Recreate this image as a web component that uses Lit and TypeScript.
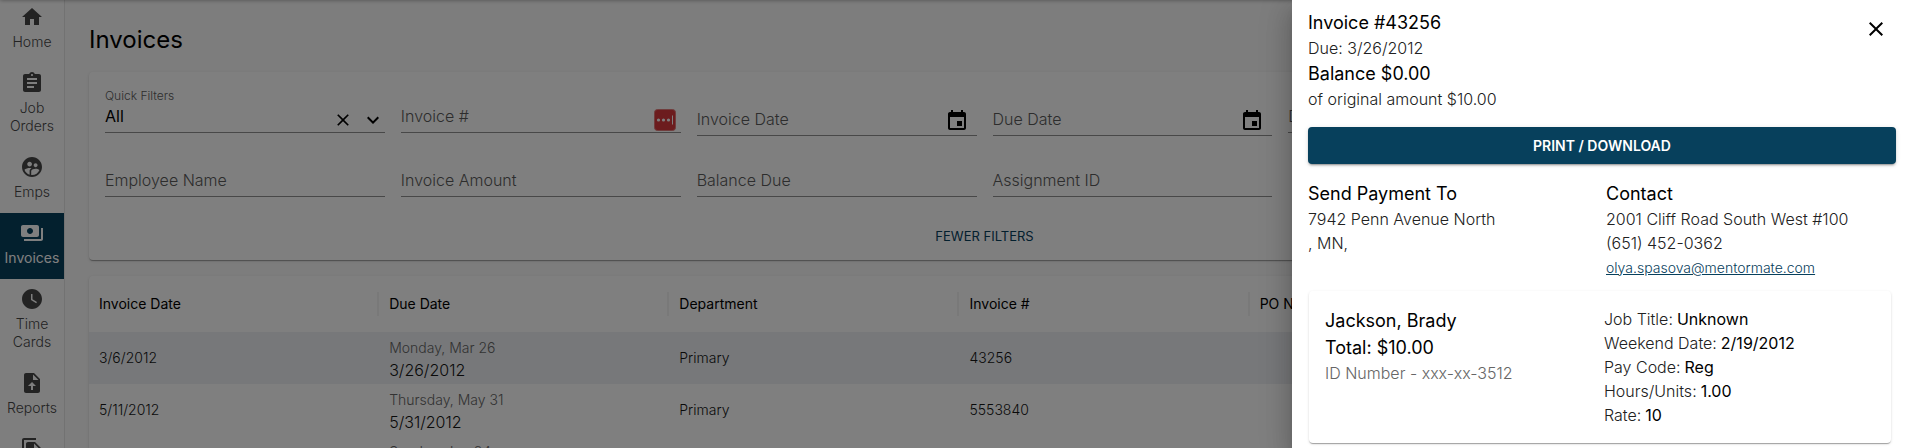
import { LitElement, html, css, svg, nothing } from "lit";
import { customElement, property } from "lit/decorators.js";
import { classMap } from "lit/directives/class-map.js";

const ICONS: Record<string, string> = {
  home: "M10 20v-6h4v6h5v-8h3L12 3 2 12h3v8z",
  assignment:
    "M19 3h-4.18C14.4 1.84 13.3 1 12 1c-1.3 0-2.4.84-2.82 2H5c-1.1 0-2 .9-2 2v14c0 1.1.9 2 2 2h14c1.1 0 2-.9 2-2V5c0-1.1-.9-2-2-2zm-7 0c.55 0 1 .45 1 1s-.45 1-1 1-1-.45-1-1 .45-1 1-1zm2 14H7v-2h7v2zm3-4H7v-2h10v2zm0-4H7V7h10v2z",
  people:
    "M12 2C6.48 2 2 6.48 2 12s4.48 10 10 10 10-4.48 10-10S17.52 2 12 2zm3.61 6.34c1.07 0 1.93.86 1.93 1.93 0 1.07-.86 1.93-1.93 1.93-1.07 0-1.93-.86-1.93-1.93-.01-1.07.86-1.93 1.93-1.93zm-6-1.58c1.3 0 2.36 1.06 2.36 2.36 0 1.3-1.06 2.36-2.36 2.36s-2.36-1.06-2.36-2.36c0-1.31 1.05-2.36 2.36-2.36zm0 9.13v3.75c-2.4-.75-4.3-2.6-5.14-4.96 1.05-1.12 3.67-1.69 5.14-1.69.53 0 1.2.08 1.9.22-1.64.87-1.9 2.02-1.9 2.68zM12 20c-.27 0-.53-.01-.79-.04v-4.07c0-1.42 2.94-2.13 4.4-2.13 1.07 0 2.92.39 3.84 1.15C18.28 17.88 15.39 20 12 20z",
  payments:
    "M19 14V6c0-1.1-.9-2-2-2H3c-1.1 0-2 .9-2 2v8c0 1.1.9 2 2 2h14c1.1 0 2-.9 2-2zm-9-1c-1.66 0-3-1.34-3-3s1.34-3 3-3 3 1.34 3 3-1.34 3-3 3zm13-6v11c0 1.1-.9 2-2 2H4v-2h17V7h2z",
  clock:
    "M12 2C6.5 2 2 6.5 2 12s4.5 10 10 10 10-4.5 10-10S17.5 2 12 2zm4.2 14.2L11 13V7h1.500v5.200l4.500 2.700-.8 1.300z",
  upload:
    "M14 2H6c-1.1 0-1.990.9-1.990 2L4 20c0 1.100.89 2 1.990 2H18c1.100 0 2-.9 2-2V8l-6-6zm-1 13v4h-2v-4H8l4.010-4L16 15h-3zm0-6V3.500L18.500 9H13z",
  copies:
    "M16 1H4c-1.100 0-2 .9-2 2v14h2V3h12V1zm-1 4l6 6v10c0 1.100-.9 2-2 2H7.990C6.890 23 6 22.100 6 21l.01-14c0-1.100.89-2 1.990-2h7zm-1 7h5.500L14 6.500V12z",
  calendar:
    "M17 12h-5v5h5v-5zM16 1v2H8V1H6v2H5c-1.110 0-1.990.9-1.990 2L3 19c0 1.100.89 2 2 2h14c1.100 0 2-.9 2-2V5c0-1.100-.9-2-2-2h-1V1h-2zm3 18H5V8h14v11z",
  close:
    "M19 6.410L17.590 5 12 10.590 6.410 5 5 6.410 10.590 12 5 17.590 6.410 19 12 13.410 17.590 19 19 17.590 13.410 12z",
  chevron: "M7.410 8.590L12 13.170l4.590-4.580L18 10l-6 6-6-6z",
};

@customElement("app-icon")
class AppIcon extends LitElement {
  @property() name = "";
  static styles = css`
    :host { display: block; width: 24px; height: 24px; flex: none; }
    svg { display: block; width: 100%; height: 100%; fill: currentColor; }
  `;
  render() {
    return html`<svg viewBox="0 0 24 24" aria-hidden="true">${svg`<path d=${ICONS[this.name]}></path>`}</svg>`;
  }
}

@customElement("side-nav")
class SideNav extends LitElement {
  static styles = css`
    :host { display: block; }
    nav { display: flex; flex-direction: column; margin-top: -3px; }
    a {
      display: flex; flex-direction: column; align-items: center; gap: 4px;
      padding: 8px 4px 12px; color: #474747; text-decoration: none; text-align: center;
      font-size: 14px; line-height: 18px; font-weight: 300;
    }
    a.active { background: #07405c; color: #fff; font-weight: 400; }
  `;
  items = [
    ["home", "Home"],
    ["assignment", "Job Orders"],
    ["people", "Emps"],
    ["payments", "Invoices"],
    ["clock", "Time Cards"],
    ["upload", "Reports"],
    ["copies", "Files"],
  ];
  render() {
    return html`<nav>
      ${this.items.map(
        ([icon, text]) => html`<a href="#" class=${classMap({ active: text === "Invoices" })}>
          <app-icon name=${icon}></app-icon><span>${text}</span></a>`
      )}
    </nav>`;
  }
}

@customElement("filter-panel")
class FilterPanel extends LitElement {
  static styles = css`
    :host { display: block; padding: 12px 16px 6px; }
    .grid { display: grid; grid-template-columns: repeat(6, minmax(0, 1fr)); column-gap: 16px; }
    .field { display: grid; grid-template-columns: 1fr auto; align-content: end; align-self: start;
      height: 48px; border-bottom: 1px solid #919191; font-size: 16px; line-height: 24px; }
    .field.date { height: 51px; }
    .field.second { margin-top: 12px; height: 48px; }
    .field label { grid-area: 1 / 1; color: #5b5b5b; font-weight: 300; padding-bottom: 4px; }
    .field input { grid-area: 1 / 1; min-width: 0; font: inherit; border: 0; padding: 0 0 4px; background: none; outline: 0; }
    .field app-icon, .field .vault { grid-area: 1 / 2; }
    .date app-icon { margin: 2px 8px 0 0; }
    .vault { width: 22px; height: 22px; margin: 5px 5px 0 0; }
    .quick label { font-size: 12px; line-height: 16px; padding: 0; }
    .quick .row { grid-area: 2 / 1; display: flex; align-items: flex-end; }
    .quick select { flex: 1; min-width: 0; height: 24px; margin: 0 0 4px; appearance: none; border: 0; padding: 0; background: none; font: inherit; color: #000; }
    .quick button { border: 0; background: none; padding: 0; margin: 0 8px 2px 0; color: #000; }
    .quick button app-icon { width: 20px; height: 20px; }
    .more { display: block; margin: 21px auto 0; border: 0; background: none; height: 36px;
      font: 400 13px/36px Inter, sans-serif; color: #07405c; padding: 0 16px; }
  `;
  field(id: string, text: string, second = false, extra: unknown = nothing, date = false) {
    return html`<div class=${classMap({ field: true, second, date })}>
      <label for=${id}>${text}</label><input id=${id} type="text" />${extra}
    </div>`;
  }
  render() {
    const cal = html`<app-icon name="calendar"></app-icon>`;
    const vault = html`<svg class="vault" viewBox="0 0 22 22" aria-hidden="true">
      <rect x="0.500" y="0.500" width="21" height="21" rx="3" fill="#d8383d" stroke="#e07a7a"></rect>
      <circle cx="4.500" cy="11" r="1.600" fill="#fff"></circle>
      <circle cx="9.500" cy="11" r="1.600" fill="#fff"></circle>
      <circle cx="14.500" cy="11" r="1.600" fill="#fff"></circle>
      <rect x="18" y="6.500" width="1" height="9" fill="#fff"></rect>
    </svg>`;
    return html`
      <div class="grid">
        <div class="field quick">
          <label for="quick">Quick Filters</label>
          <div class="row">
            <select id="quick"><option>All</option></select>
            <button aria-label="Clear"><app-icon name="close"></app-icon></button>
            <app-icon name="chevron"></app-icon>
          </div>
        </div>
        ${this.field("num", "Invoice #", false, vault)}
        ${this.field("idate", "Invoice Date", false, cal, true)}
        ${this.field("ddate", "Due Date", false, cal, true)}
        ${this.field("dept", "Department")}
        ${this.field("po", "PO Number")}
        ${this.field("emp", "Employee Name", true)}
        ${this.field("amt", "Invoice Amount", true)}
        ${this.field("bal", "Balance Due", true)}
        ${this.field("asg", "Assignment ID", true)}
      </div>
      <button class="more">FEWER FILTERS</button>
    `;
  }
}

@customElement("invoice-table")
class InvoiceTable extends LitElement {
  static styles = css`
    :host { display: block; }
    table { width: 100%; table-layout: fixed; border-collapse: collapse; font-size: 14px; line-height: 20px; }
    th { height: 56px; padding: 0; font-weight: 400; color: #000; text-align: left; }
    th span { display: block; line-height: 24px; padding-left: 10px; border-right: 2px solid #f2f2f2; }
    th.end { width: 50px; }
    td { height: 52px; padding: 0 10px; font-weight: 300; color: #141414; }
    tr.selected td { background: #eef1f5; }
    .day { display: block; padding-top: 4px; color: #666; }
    .due { display: block; font-size: 16px; line-height: 24px; }
  `;
  rows = [
    ["3/6/2012", "Monday, Mar 26", "3/26/2012", "Primary", "43256"],
    ["5/11/2012", "Thursday, May 31", "5/31/2012", "Primary", "5553840"],
    ["6/4/2012", "Sunday, Jun 24", "6/24/2012", "Primary", "5553841"],
  ];
  render() {
    return html`<table>
      <thead><tr>
        ${["Invoice Date", "Due Date", "Department", "Invoice #", "PO Number", "Balance"].map(
          (h) => html`<th scope="col"><span>${h}</span></th>`
        )}<th class="end"></th>
      </tr></thead>
      <tbody>
        ${this.rows.map(
          (r, i) => html`<tr class=${classMap({ selected: i === 0 })}>
            <td>${r[0]}</td>
            <td><span class="day">${r[1]}</span><span class="due">${r[2]}</span></td>
            <td>${r[3]}</td><td>${r[4]}</td><td></td><td></td><td></td>
          </tr>`
        )}
      </tbody>
    </table>`;
  }
}

@customElement("invoice-drawer")
class InvoiceDrawer extends LitElement {
  static styles = css`
    :host { display: block; box-sizing: border-box; padding: 10px 13px 4px 16px; background: #fff; color: #212121;
      font-size: 16px; line-height: 24px; font-weight: 300; }
    h2, h3, p, dl, dd { margin: 0; }
    header { display: flex; justify-content: space-between; align-items: flex-start; }
    h2, h3, .lead { font-size: 18px; line-height: 26px; font-weight: 400; color: #000; }
    .head p { line-height: 25px; }
    .head .lead { line-height: 26px; }
    .close { border: 0; background: none; padding: 0; margin: 7px 8px 0 0; color: #000; }
    .print { display: block; width: 100%; height: 37px; margin: 15px 0 17px; border: 0; border-radius: 4px;
      background: #07405c; color: #fff; font: 600 14px/36px Inter, sans-serif;
      box-shadow: 0 3px 1px -2px rgba(0,0,0,.2), 0 2px 2px rgba(0,0,0,.14), 0 1px 5px rgba(0,0,0,.12); }
    .cols { display: grid; grid-template-columns: 1fr 1fr; column-gap: 8px; }
    .cols a { font-size: 14px; font-weight: 300; color: #07405c; }
    .card { display: grid; grid-template-columns: 1fr 1fr; column-gap: 8px; margin: 11px 5px 0 1px; padding: 16px; border-radius: 4px;
      box-shadow: 0 2px 1px -1px rgba(0,0,0,.2), 0 1px 1px rgba(0,0,0,.14), 0 1px 3px rgba(0,0,0,.12); }
    .card .lead { line-height: 27px; }
    .id { color: #666; }
    dl div { display: flex; gap: 4px; }
    dt { white-space: nowrap; }
    dd { font-weight: 400; color: #000; }
  `;
  details = [
    ["Job Title:", "Unknown"],
    ["Weekend Date:", "2/19/2012"],
    ["Pay Code:", "Reg"],
    ["Hours/Units:", "1.00"],
    ["Rate:", "10"],
  ];
  render() {
    return html`
      <header>
        <div class="head">
          <h2>Invoice #43256</h2>
          <p>Due: 3/26/2012</p>
          <p class="lead">Balance $0.00</p>
          <p>of original amount $10.00</p>
        </div>
        <button class="close" aria-label="Close"><app-icon name="close"></app-icon></button>
      </header>
      <button class="print">PRINT / DOWNLOAD</button>
      <div class="cols">
        <section><h3>Send Payment To</h3><p>7942 Penn Avenue North</p><p>, MN,</p></section>
        <section><h3>Contact</h3><p>2001 Cliff Road South West #100</p><p>(651) 452-0362</p>
          <p><a href="mailto:olya.spasova@mentormate.com">olya.spasova@mentormate.com</a></p></section>
      </div>
      <div class="card">
        <div><h3 class="lead">Jackson, Brady</h3><p class="lead">Total: $10.00</p><p class="id">ID Number - xxx-xx-3512</p></div>
        <dl>${this.details.map(([k, v]) => html`<div><dt>${k}</dt><dd>${v}</dd></div>`)}</dl>
      </div>
    `;
  }
}

@customElement("app-root")
class AppRoot extends LitElement {
  static styles = css`
    :host { display: block; position: relative; height: 100vh; overflow: hidden; font-family: Inter, sans-serif; background: #fafafa; }
    .top { position: absolute; inset: -4px 0 auto; height: 4px; z-index: 1; box-shadow: 0 0 4px rgba(0,0,0,.4); }
    .shell { display: grid; grid-template-columns: 64px minmax(0, 1fr); height: 100%; }
    side-nav { border-right: 1px solid #e4e4e4; background: #fdfdfd; width: 64px; overflow: hidden; }
    main { padding: 24px 29px 0 25px; overflow: hidden; }
    h1 { margin: 0 0 16px; font-size: 24px; line-height: 32px; font-weight: 400; color: #000; }
    .card { background: #fff; border-radius: 4px; overflow: hidden; margin-bottom: 16px;
      box-shadow: 0 2px 1px -1px rgba(0,0,0,.2), 0 1px 1px rgba(0,0,0,.14), 0 1px 3px rgba(0,0,0,.12); }
    .backdrop { position: absolute; inset: 0; z-index: 2; background: rgba(0,0,0,.5); }
    invoice-drawer { position: absolute; inset: 0 0 0 auto; z-index: 3; width: 617px; max-width: 100%; overflow: hidden;
      box-shadow: 0 8px 10px -5px rgba(0,0,0,.2), 0 16px 24px 2px rgba(0,0,0,.14), 0 6px 30px 5px rgba(0,0,0,.12); }
  `;
  render() {
    return html`
      <div class="top"></div>
      <div class="shell">
        <side-nav></side-nav>
        <main>
          <h1>Invoices</h1>
          <filter-panel class="card"></filter-panel>
          <invoice-table class="card"></invoice-table>
        </main>
      </div>
      <div class="backdrop"></div>
      <invoice-drawer role="dialog" aria-label="Invoice details"></invoice-drawer>
    `;
  }
}
